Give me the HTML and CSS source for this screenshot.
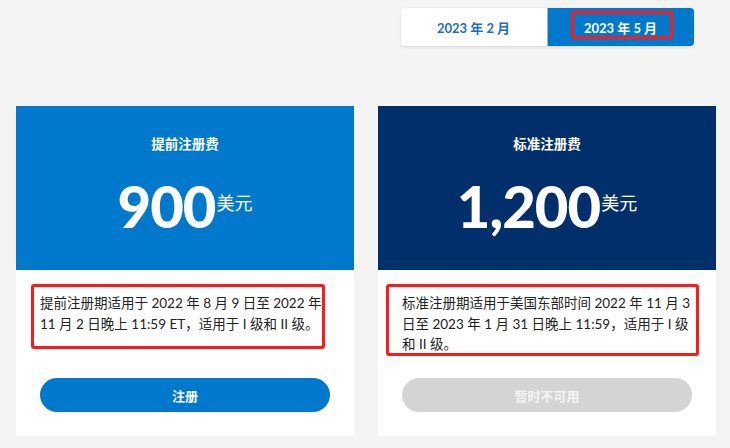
FILE: index.html
```html
<!DOCTYPE html>
<html lang="zh-CN">
<head>
<meta charset="utf-8">
<title>注册费</title>
<link rel="stylesheet" href="styles.css">
</head>
<body>
<div class="page">
  <div class="tabs-row">
    <div class="tabs">
      <div class="tab">2023 年 2 月</div>
      <div class="tab tab-active">2023 年 5 月<span class="mark mark-tab"></span></div>
    </div>
  </div>
  <div class="cards">
    <div class="card">
      <div class="card-head head-blue">
        <div class="card-title">提前注册费</div>
        <div class="price"><span class="amount">900</span><span class="unit">美元</span></div>
      </div>
      <div class="card-body">
        <p class="desc">提前注册期适用于 2022 年 8 月 9 日至 2022 年 11 月 2 日晚上 11:59 ET，适用于 I 级和 II 级。<span class="mark mark-desc1"></span></p>
        <a class="btn btn-primary">注册</a>
      </div>
    </div>
    <div class="card">
      <div class="card-head head-navy">
        <div class="card-title">标准注册费</div>
        <div class="price"><span class="amount">1,200</span><span class="unit">美元</span></div>
      </div>
      <div class="card-body">
        <p class="desc">标准注册期适用于美国东部时间 2022 年 11 月 3 日至 2023 年 1 月 31 日晚上 11:59，适用于 I 级和 II 级。<span class="mark mark-desc2"></span></p>
        <a class="btn btn-disabled">暂时不可用</a>
      </div>
    </div>
  </div>
</div>
</body>
</html>
```

FILE: styles.css
```css
html, body {
  margin: 0;
  padding: 0;
  background: #f4f4f4;
}
body {
  font-family: "Lato", "Noto Sans CJK SC", sans-serif;
  color: #222;
}
.page {
  padding: 8px 14px 0 16px;
}
.tabs-row {
  display: grid;
  grid-template-columns: 338px 338px;
  column-gap: 24px;
  height: 98px;
}
.tabs {
  grid-column: 2;
  justify-self: center;
  align-self: start;
  display: flex;
  width: 293px;
  height: 38px;
  border-radius: 4px;
  box-shadow: 0 1px 3px rgba(0,0,0,0.12);
}
.tab {
  position: relative;
  flex: 1;
  display: flex;
  align-items: center;
  justify-content: center;
  font-size: 13px;
  font-weight: 700;
  color: #1d6fbe;
  background: #fff;
  border-radius: 4px 0 0 4px;
}
.tab-active {
  background: #0078cc;
  color: #fff;
  border-radius: 0 4px 4px 0;
  border-left: 1px solid #a9b3bd;
}
.cards {
  display: grid;
  grid-template-columns: 338px 338px;
  column-gap: 24px;
}
.card {
  background: #fff;
  display: flex;
  flex-direction: column;
  height: 330px;
}
.card-head {
  height: 164px;
  color: #fff;
  display: flex;
  flex-direction: column;
  align-items: center;
  box-sizing: border-box;
  padding-top: 29px;
}
.head-blue { background: #0079cc; }
.head-navy { background: #002f6b; }
.card-title {
  font-size: 13.5px;
  font-weight: 700;
  line-height: 18px;
}
.price {
  display: flex;
  align-items: center;
  margin-top: 18px;
}
.amount {
  font-size: 58px;
  font-weight: 900;
  line-height: 70px;
  letter-spacing: -1px;
}
.unit {
  font-size: 18px;
  font-weight: 400;
  margin-left: 1px;
  margin-top: -9px;
}
.card-body {
  flex: 1;
  display: flex;
  flex-direction: column;
  padding: 23px 24px 24px;
}
.desc {
  position: relative;
  margin: 0;
  font-size: 13.5px;
  line-height: 20.5px;
  color: #222;
}
.btn {
  margin-top: auto;
  height: 34px;
  border-radius: 17px;
  display: flex;
  align-items: center;
  justify-content: center;
  font-size: 13px;
  font-weight: 700;
  color: #fff;
}
.btn-primary { background: #0078cc; }
.btn-disabled { background: #d4d4d4; color: #f4f4f4; }
.mark {
  position: absolute;
  border: 3px solid #ff1a1a;
  border-radius: 3px;
  box-sizing: border-box;
  pointer-events: none;
}
.mark-tab {
  left: 23px;
  top: 3px;
  width: 102px;
  height: 28px;
}
.mark-desc1 {
  left: -9px;
  top: -9px;
  width: 294px;
  height: 65px;
}
.mark-desc2 {
  left: -16px;
  top: -9px;
  width: 313px;
  height: 72px;
}
```
